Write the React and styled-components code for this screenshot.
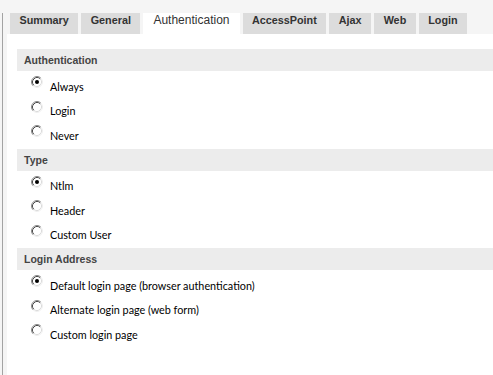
import styled, { createGlobalStyle } from "styled-components";

const GlobalStyle = createGlobalStyle`
  html, body {
    margin: 0;
    padding: 0;
    background: #f5f5f5;
  }
  #root {
    height: 375px;
  }
`;

const tabs = ["Summary", "General", "Authentication", "AccessPoint", "Ajax", "Web", "Login"];

const sections = [
  { title: "Authentication", options: ["Always", "Login", "Never"] },
  { title: "Type", options: ["Ntlm", "Header", "Custom User"] },
  {
    title: "Login Address",
    options: [
      "Default login page (browser authentication)",
      "Alternate login page (web form)",
      "Custom login page",
    ],
  },
];

const Radio = ({ checked }) => (
  <RadioBox width="12" height="12" viewBox="0 0 12 12">
    <circle cx="6" cy="6" r="5" fill="#fff" />
    <path d="M2.11 9.89 A5.5 5.5 0 0 1 9.89 2.11" fill="none" stroke="#8a8a8a" strokeWidth="1" />
    <path d="M9.89 2.11 A5.5 5.5 0 0 1 2.11 9.89" fill="none" stroke="#f0f0f0" strokeWidth="1" />
    <path d="M2.82 9.18 A4.5 4.5 0 0 1 9.18 2.82" fill="none" stroke="#4a4a4a" strokeWidth="1" />
    <path d="M9.18 2.82 A4.5 4.5 0 0 1 2.82 9.18" fill="none" stroke="#dcdcdc" strokeWidth="1" />
    {checked && <circle cx="6" cy="6" r="2" fill="#000" />}
  </RadioBox>
);

const App = () => {
  return (
    <>
      <GlobalStyle />
      <Frame>
        <TabBar>
          {tabs.map((t) => (
            <Tab key={t} $active={t === "Authentication"}>
              {t}
            </Tab>
          ))}
        </TabBar>
        <Panel>
          {sections.map((s) => (
            <Section key={s.title}>
              <SectionHeader>{s.title}</SectionHeader>
              <OptionList>
                {s.options.map((o, i) => (
                  <Option key={o}>
                    <Radio checked={i === 0} />
                    <OptionLabel>{o}</OptionLabel>
                  </Option>
                ))}
              </OptionList>
            </Section>
          ))}
        </Panel>
      </Frame>
    </>
  );
};

const Frame = styled.div`
  height: 362px;
  margin-top: 13px;
  margin-left: 2px;
  border-left: 1px solid #a3a3a3;
  display: flex;
  flex-direction: column;
`;

const TabBar = styled.div`
  display: flex;
  gap: 3px;
  padding-left: 7px;
  height: 21px;
  flex-shrink: 0;
`;

const Tab = styled.div`
  padding-top: 1px;
  padding-left: ${(p) => (p.$active ? "10px" : "9.5px")};
  padding-right: ${(p) => (p.$active ? "10px" : "9.5px")};
  height: 20px;
  line-height: 13px;
  font-family: "Liberation Sans", Arial, sans-serif;
  font-size: ${(p) => (p.$active ? "12px" : "10.8px")};
  font-weight: ${(p) => (p.$active ? "normal" : "bold")};
  color: #333;
  background: ${(p) => (p.$active ? "#fff" : "#dcdcdc")};
  white-space: nowrap;
`;

const Panel = styled.div`
  flex: 1;
  background: #fff;
  margin-left: 4px;
  padding: 15px 0 0 10px;
`;

const Section = styled.div`
  display: flex;
  flex-direction: column;
`;

const SectionHeader = styled.div`
  height: 22px;
  line-height: 22px;
  padding-left: 7px;
  background: #ececec;
  font-family: "Liberation Sans", Arial, sans-serif;
  font-size: 10.5px;
  font-weight: bold;
  color: #444;
`;

const OptionList = styled.div`
  display: flex;
  flex-direction: column;
  padding: 3px 0 1px;
`;

const Option = styled.div`
  display: flex;
  align-items: center;
  height: 24.5px;
  padding-left: 14px;
  gap: 7px;
`;

const RadioBox = styled.svg`
  flex-shrink: 0;
  margin-top: -8px;
`;

const OptionLabel = styled.span`
  font-family: Lato, "Liberation Sans", sans-serif;
  font-size: 10.8px;
  color: #000;
  white-space: nowrap;
`;

export default App;
